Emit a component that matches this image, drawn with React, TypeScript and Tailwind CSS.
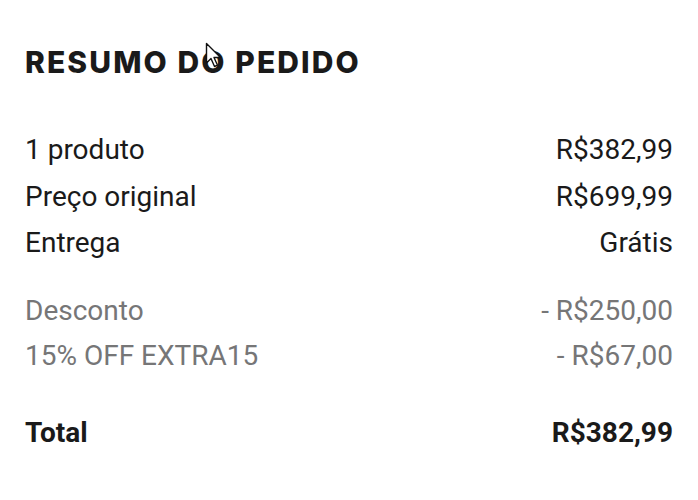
import React from "react";

const rows = [
    { label: "1 produto", value: "R$382,99" },
    { label: "Preço original", value: "R$699,99" },
    { label: "Entrega", value: "Grátis" },
];

const discounts = [
    { label: "Desconto", value: "- R$250,00" },
    { label: "15% OFF EXTRA15", value: "- R$67,00" },
];

function Cursor() {
    return (
        <svg className="absolute left-[205px] top-[42px]" width="20" height="28" viewBox="0 0 20 28">
            <path d="M1.5 1.5 L1.5 21 L6 16.5 L9.5 24.5 L12.5 23.2 L9 15.5 L15.5 15.5 Z" fill="#fff" stroke="#111" strokeWidth="1.4" strokeLinejoin="round" />
        </svg>
    );
}

export default function App() {
    return (
        <div className="relative w-[698px] h-[500px] bg-white px-[25px] pt-[44px] text-[#1a1a1a]" style={{ fontFamily: "Roboto, sans-serif" }}>
            <h2 className="text-[30px] leading-[36px] font-extrabold tracking-[2.1px]" style={{ fontFamily: "Inter, sans-serif" }}>
                RESUMO DO PEDIDO
            </h2>
            <Cursor />
            <div className="mt-[47px] flex flex-col">
                {rows.map((r) => (
                    <div key={r.label} className="flex h-[46.5px] items-center justify-between text-[28px]">
                        <span>{r.label}</span>
                        <span>{r.value}</span>
                    </div>
                ))}
            </div>
            <div className="mt-[22px] flex flex-col text-[#767677]">
                {discounts.map((r) => (
                    <div key={r.label} className="flex h-[45px] items-center justify-between text-[28px]">
                        <span>{r.label}</span>
                        <span>{r.value}</span>
                    </div>
                ))}
            </div>
            <div className="mt-[31px] flex h-[46px] items-center justify-between text-[28px] font-bold">
                <span>Total</span>
                <span>R$382,99</span>
            </div>
        </div>
    );
}
